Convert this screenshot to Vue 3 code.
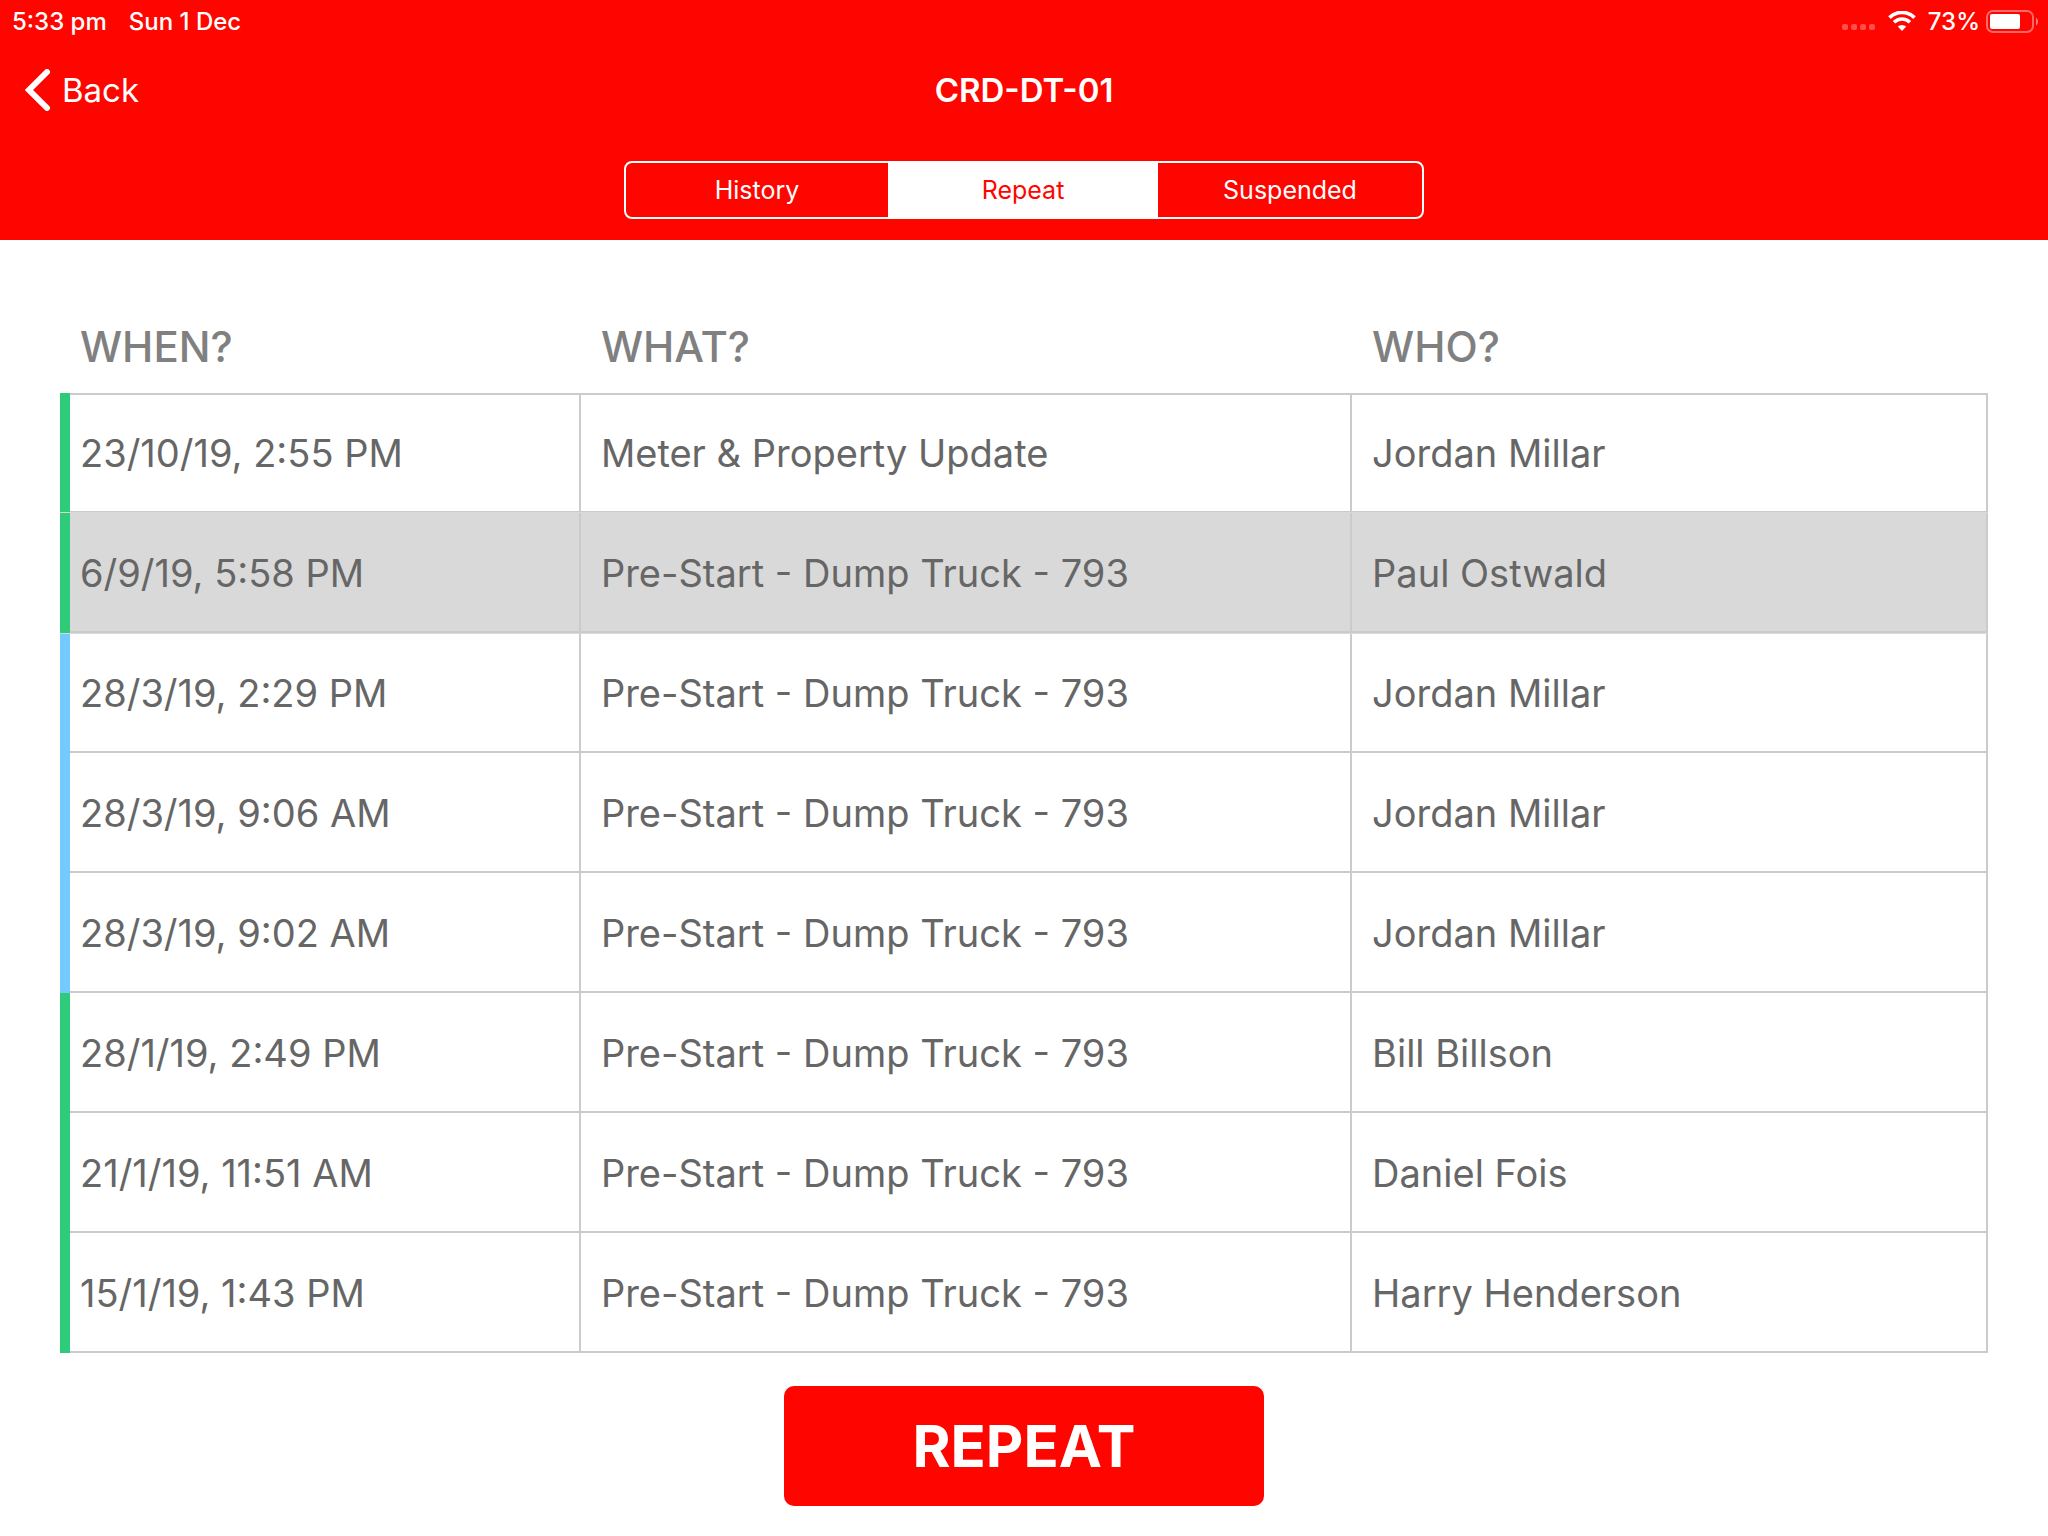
<script setup>
import { ref } from "vue";

const tabs = ["History", "Repeat", "Suspended"];
let activeTab = ref("Repeat");
let selected = ref(2);

const jobs = [
  { id: 1, when: "23/10/19, 2:55 PM", what: "Meter & Property Update", who: "Jordan Millar", status: "done" },
  { id: 2, when: "6/9/19, 5:58 PM", what: "Pre-Start - Dump Truck - 793", who: "Paul Ostwald", status: "done" },
  { id: 3, when: "28/3/19, 2:29 PM", what: "Pre-Start - Dump Truck - 793", who: "Jordan Millar", status: "open" },
  { id: 4, when: "28/3/19, 9:06 AM", what: "Pre-Start - Dump Truck - 793", who: "Jordan Millar", status: "open" },
  { id: 5, when: "28/3/19, 9:02 AM", what: "Pre-Start - Dump Truck - 793", who: "Jordan Millar", status: "open" },
  { id: 6, when: "28/1/19, 2:49 PM", what: "Pre-Start - Dump Truck - 793", who: "Bill Billson", status: "done" },
  { id: 7, when: "21/1/19, 11:51 AM", what: "Pre-Start - Dump Truck - 793", who: "Daniel Fois", status: "done" },
  { id: 8, when: "15/1/19, 1:43 PM", what: "Pre-Start - Dump Truck - 793", who: "Harry Henderson", status: "done" },
];
</script>

<template>
  <div class="screen">
    <header class="top">
      <div class="status">
        <span>5:33 pm</span>
        <span>Sun 1 Dec</span>
        <div class="indicators">
          <svg class="signal" width="33" height="6" viewBox="0 0 33 6">
            <rect v-for="n in 4" :key="n" :x="(n - 1) * 9" width="6" height="6" rx="2" fill="#fff" fill-opacity="0.3" />
          </svg>
          <svg class="wifi" width="28" height="20" viewBox="0 0 28 20">
            <path d="M1.500 6.600A17.700 17.700 0 0 1 26.500 6.600" fill="none" stroke="#fff" stroke-width="3.800" />
            <path d="M6 11.300A11.400 11.400 0 0 1 22 11.300" fill="none" stroke="#fff" stroke-width="3.600" />
            <path d="M14 20L9.800 15.600A6 6 0 0 1 18.200 15.600Z" fill="#fff" />
          </svg>
          <span>73%</span>
          <svg class="battery" width="53" height="23" viewBox="0 0 53 23">
            <rect x="1" y="1" width="46" height="21" rx="6" fill="none" stroke="#fff" stroke-opacity="0.4" stroke-width="2" />
            <rect x="4" y="4" width="30" height="15" rx="2" fill="#fff" />
            <path d="M50 7.500A5 5 0 0 1 50 15.500Z" fill="#fff" fill-opacity="0.5" />
          </svg>
        </div>
      </div>
      <nav class="nav">
        <button type="button" class="back">
          <svg width="26" height="42" viewBox="0 0 26 42">
            <path d="M22 3L4 21L22 39" fill="none" stroke="#fff" stroke-width="6" stroke-linecap="round" stroke-linejoin="miter" />
          </svg>
          Back
        </button>
        <h1>CRD-DT-01</h1>
      </nav>
      <div class="tabs">
        <button
          v-for="tab in tabs"
          :key="tab"
          type="button"
          :class="{ active: tab === activeTab }"
          @click="activeTab = tab"
        >{{ tab }}</button>
      </div>
    </header>

    <main>
      <table>
        <colgroup>
          <col class="c-marker" />
          <col class="c-when" />
          <col class="c-what" />
          <col />
        </colgroup>
        <thead>
          <tr>
            <td></td>
            <th>WHEN?</th>
            <th>WHAT?</th>
            <th>WHO?</th>
          </tr>
        </thead>
        <tbody>
          <tr v-for="job in jobs" :key="job.id" :class="{ selected: job.id === selected }" @click="selected = job.id">
            <td class="marker" :class="job.status"></td>
            <td>{{ job.when }}</td>
            <td>{{ job.what }}</td>
            <td>{{ job.who }}</td>
          </tr>
        </tbody>
      </table>
      <button type="button" class="repeat">REPEAT</button>
    </main>
  </div>
</template>

<style>
body {
  margin: 0;
  background: #fff;
}
</style>

<style scoped>
.screen {
  font-family: Inter, "Liberation Sans", sans-serif;
  min-height: 100vh;
}
button {
  font-family: inherit;
  border: 0;
  padding: 0;
  cursor: pointer;
}

.top {
  background: #ff0500;
  color: #fff;
  height: 240px;
}
.status {
  display: flex;
  align-items: center;
  gap: 22px;
  height: 42px;
  padding: 0 9px 0 12px;
  font-size: 24px;
  font-weight: 500;
}
.indicators {
  display: flex;
  align-items: center;
  margin-left: auto;
}
.signal {
  margin: 12px 13px 0 0;
}
.wifi {
  margin-right: 12px;
}
.battery {
  margin-left: 6px;
}

.nav {
  display: grid;
  grid-template-columns: 1fr auto 1fr;
  align-items: center;
  height: 96px;
  padding: 0 25px;
}
.back {
  display: flex;
  align-items: center;
  justify-self: start;
  gap: 11px;
  background: none;
  color: #fff;
  font-size: 33px;
  line-height: 42px;
}
h1 {
  margin: 0;
  font-size: 33px;
  line-height: 42px;
  font-weight: 600;
}

.tabs {
  display: grid;
  grid-template-columns: 262fr 270fr 264fr;
  box-sizing: border-box;
  width: 800px;
  max-width: 100%;
  height: 58px;
  margin: 23px auto 0;
  border: 2px solid #fff;
  border-radius: 8px;
  overflow: hidden;
}
.tabs button {
  background: none;
  color: #fff;
  font-size: 25px;
}
.tabs .active {
  background: #fff;
  color: #ff0500;
}

main {
  padding: 60px 60px 30px;
}
table {
  width: 100%;
  table-layout: fixed;
  border-collapse: separate;
  border-spacing: 0;
}
.c-marker {
  width: 10px;
}
.c-when {
  width: 26.5%;
}
.c-what {
  width: 40%;
}
th {
  height: 93px;
  padding: 0 20px;
  color: #808080;
  font-size: 42px;
  font-weight: 500;
  text-align: left;
}
tbody td {
  box-sizing: border-box;
  height: 120px;
  padding: 2px 20px 0;
  border-right: 2px solid #cbcbcb;
  border-bottom: 2px solid #cbcbcb;
  color: #666;
  font-size: 38px;
  white-space: nowrap;
}
tbody tr:first-child td:not(.marker) {
  box-shadow: inset 0 2px 0 #cbcbcb;
}
th:nth-child(2),
td:nth-child(2) {
  padding-left: 10px;
}
tbody .marker {
  padding: 0;
  border: 0;
}
.done {
  background: #2ecc7a;
}
.open {
  background: #74cafd;
}
.selected td {
  position: relative;
  box-shadow: 0 -1px 0 #d9d9d9, 0 1px 0 #d9d9d9;
}
.selected td:not(.marker) {
  background: #d9d9d9;
}

.repeat {
  display: block;
  width: 480px;
  height: 120px;
  margin: 33px auto 0;
  border-radius: 10px;
  background: #ff0500;
  color: #fff;
  font-size: 58px;
  font-weight: 700;
}
</style>
